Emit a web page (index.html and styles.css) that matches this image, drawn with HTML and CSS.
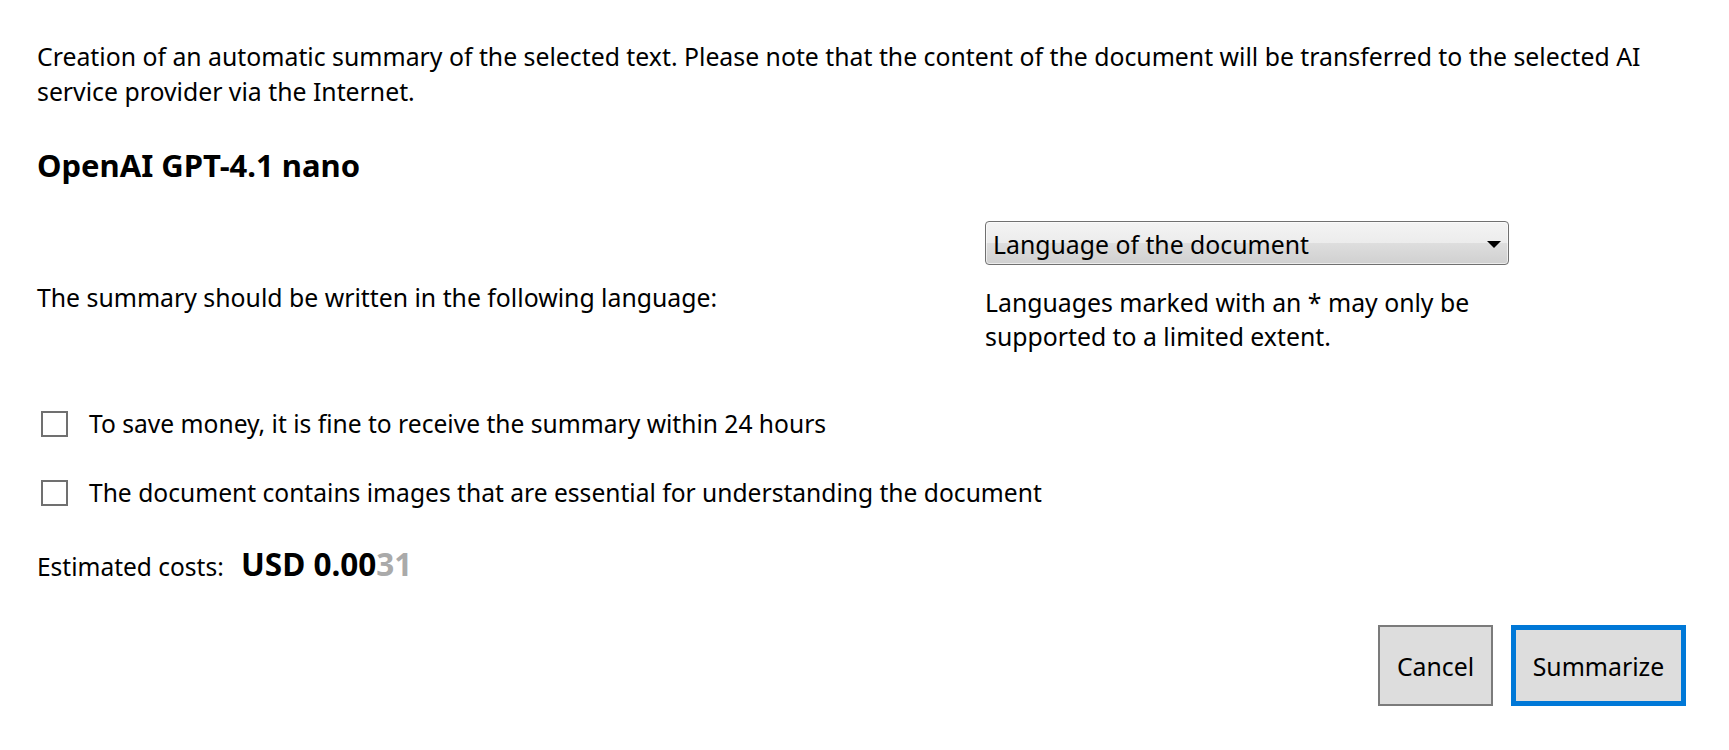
FILE: index.html
```html
<!DOCTYPE html>
<html lang="en">
<head>
<meta charset="utf-8">
<title>Summarize</title>
<link rel="stylesheet" href="styles.css">
</head>
<body>
<div class="dialog">
  <p class="intro">Creation of an automatic summary of the selected text. Please note that the content of the document will be transferred to the selected AI<br>service provider via the Internet.</p>

  <h1 class="model">OpenAI GPT-4.1 nano</h1>

  <div class="language-row">
    <div class="language-label">The summary should be written in the following language:</div>
    <div class="language-control">
      <div class="select">
        <span class="select-text">Language of the document</span>
        <svg class="select-arrow" width="14" height="7" viewBox="0 0 14 7"><polygon points="0,0 14,0 7,7" fill="#000"/></svg>
      </div>
      <p class="note">Languages marked with an * may only be supported to a limited extent.</p>
    </div>
  </div>

  <div class="options">
    <label class="option"><span class="checkbox"></span><span class="option-text">To save money, it is fine to receive the summary within 24 hours</span></label>
    <label class="option"><span class="checkbox"></span><span class="option-text">The document contains images that are essential for understanding the document</span></label>
  </div>

  <div class="cost">
    <span class="cost-label">Estimated costs:</span>
    <span class="cost-value">USD 0.00<span class="cost-faint">31</span></span>
  </div>

  <div class="actions">
    <button class="btn btn-cancel">Cancel</button>
    <button class="btn btn-primary">Summarize</button>
  </div>
</div>
</body>
</html>
```
FILE: styles.css
```css
html, body {
  margin: 0;
  padding: 0;
  background: #ffffff;
}

body {
  font-family: "Noto Sans", "Open Sans", sans-serif;
  font-size: 24.8px;
  color: #000000;
}

.dialog {
  padding: 39px 43px 0 37px;
}

.intro {
  margin: 0;
  line-height: 35px;
}

.model {
  margin: 36px 0 0;
  font-size: 31px;
  font-weight: 700;
  line-height: 40px;
}

.language-row {
  margin-top: 36px;
  display: grid;
  grid-template-columns: 948px 524px;
}

.language-label {
  padding-top: 58.5px;
  line-height: 34px;
}

.select {
  box-sizing: border-box;
  height: 44px;
  border: 1px solid #707070;
  border-radius: 4px;
  background: linear-gradient(to bottom, #f3f3f3 0%, #ececec 50%, #dedede 50%, #d0d0d0 100%);
  display: flex;
  align-items: center;
  justify-content: space-between;
  padding: 2px 7px 0 7px;
  line-height: 40px;
  box-shadow: inset 0 0 0 1px rgba(255, 255, 255, 0.6);
}

.select-arrow {
  display: block;
}

.note {
  margin: 20.4px 0 0;
  line-height: 34px;
}

.options {
  margin-top: 54px;
  display: flex;
  flex-direction: column;
  gap: 35px;
}

.option {
  display: flex;
  align-items: center;
  line-height: 34px;
}

.checkbox {
  box-sizing: border-box;
  width: 27px;
  height: 26px;
  margin-left: 4px;
  margin-right: 21px;
  border: 2px solid #707070;
  background: #ffffff;
  flex: none;
}

.option-text {
  font-size: 24.6px;
}

.cost {
  margin-top: 34px;
  display: flex;
  align-items: baseline;
}

.cost-label {
  font-size: 24.5px;
  line-height: 34px;
  width: 204px;
  flex: none;
}

.cost-value {
  font-size: 31.5px;
  font-weight: 700;
  line-height: 40px;
}

.cost-faint {
  color: #aaaaaa;
}

.actions {
  margin-top: 41px;
  display: flex;
  justify-content: flex-end;
  gap: 18px;
}

.btn {
  box-sizing: border-box;
  height: 81px;
  padding: 0;
  font-family: inherit;
  font-size: 24.8px;
  color: #000000;
  background: #dddddd;
  cursor: default;
}

.btn-cancel {
  width: 115px;
  border: 2px solid #7b7b7b;
}

.btn-primary {
  width: 175px;
  border: 5px solid #0078d7;
}
```
